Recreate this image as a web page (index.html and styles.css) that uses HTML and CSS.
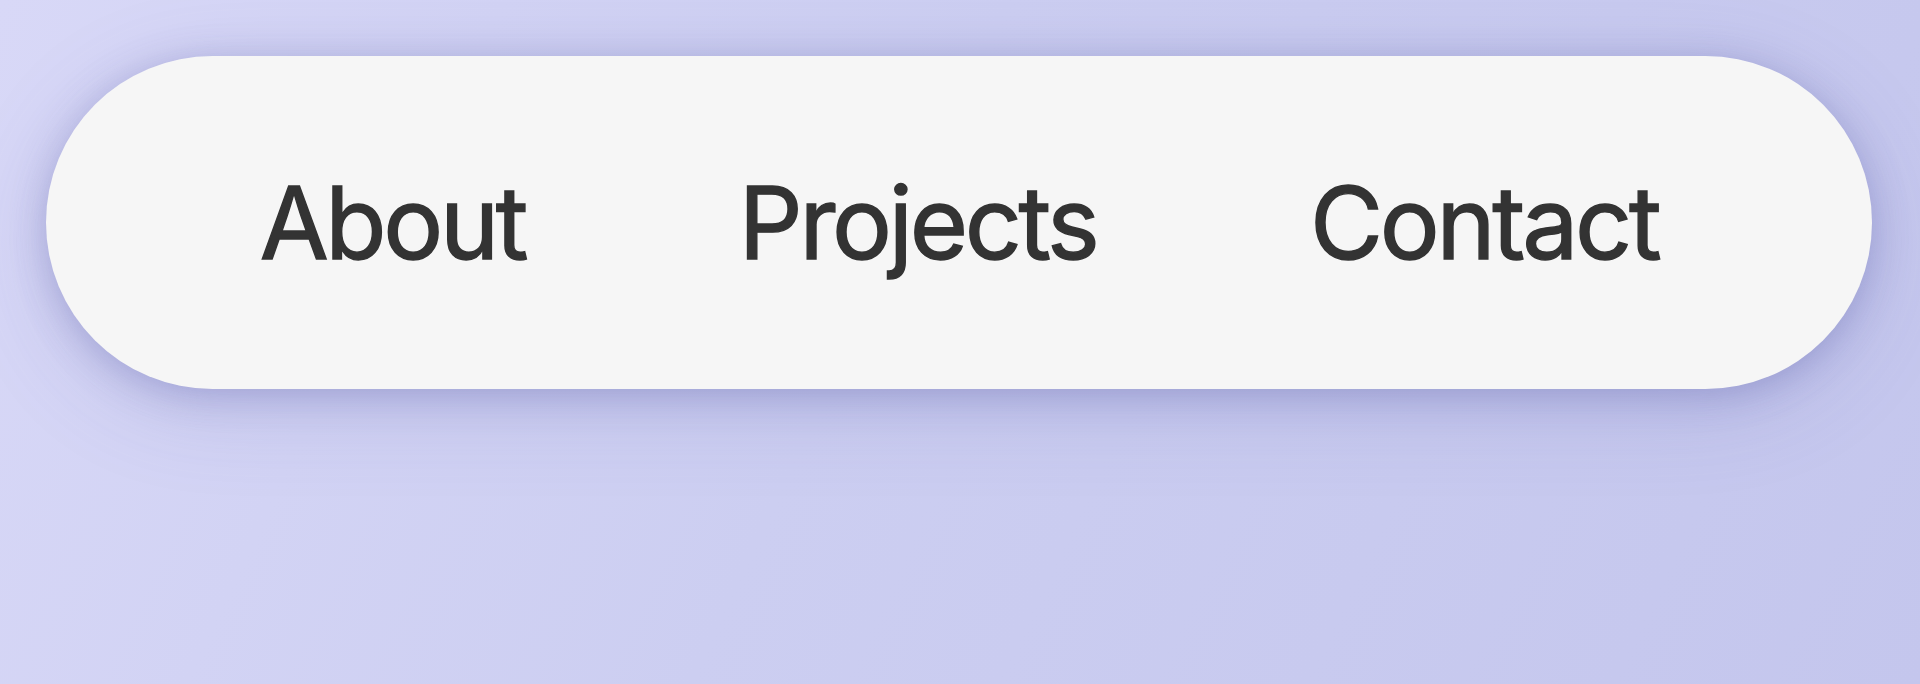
FILE: index.html
```html
<!DOCTYPE html>
<html lang="en">
<head>
    <meta charset="UTF-8">
    <title>Navigation</title>
    <link rel="stylesheet" href="styles.css">
</head>
<body>
    <nav class="nav-pill">
        <a href="#about">About</a>
        <a href="#projects">Projects</a>
        <a href="#contact">Contact</a>
    </nav>
</body>
</html>
```

FILE: styles.css
```css
html, body {
    height: 100%;
}

body {
    font-family: Inter, "Noto Sans", sans-serif;
    background: linear-gradient(115deg, #d8d8f7 0%, #ccceF1 45%, #c4c6ed 100%);
    margin: 0;
    padding: 56px 48px 0 46px;
    box-sizing: border-box;
}

.nav-pill {
    height: 333px;
    display: flex;
    align-items: center;
    justify-content: space-evenly;
    background-color: #f6f6f6;
    border-radius: 9999px;
    box-shadow: 0 6px 36px rgba(80, 84, 160, 0.3), 0 20px 90px rgba(90, 94, 170, 0.18);
}

.nav-pill a {
    color: #333;
    text-decoration: none;
    font-size: 100px;
    font-weight: 400;
    letter-spacing: -3.3px;
    -webkit-text-stroke: 1.4px #333;
}

.nav-pill a:hover {
    color: #111;
}
```
